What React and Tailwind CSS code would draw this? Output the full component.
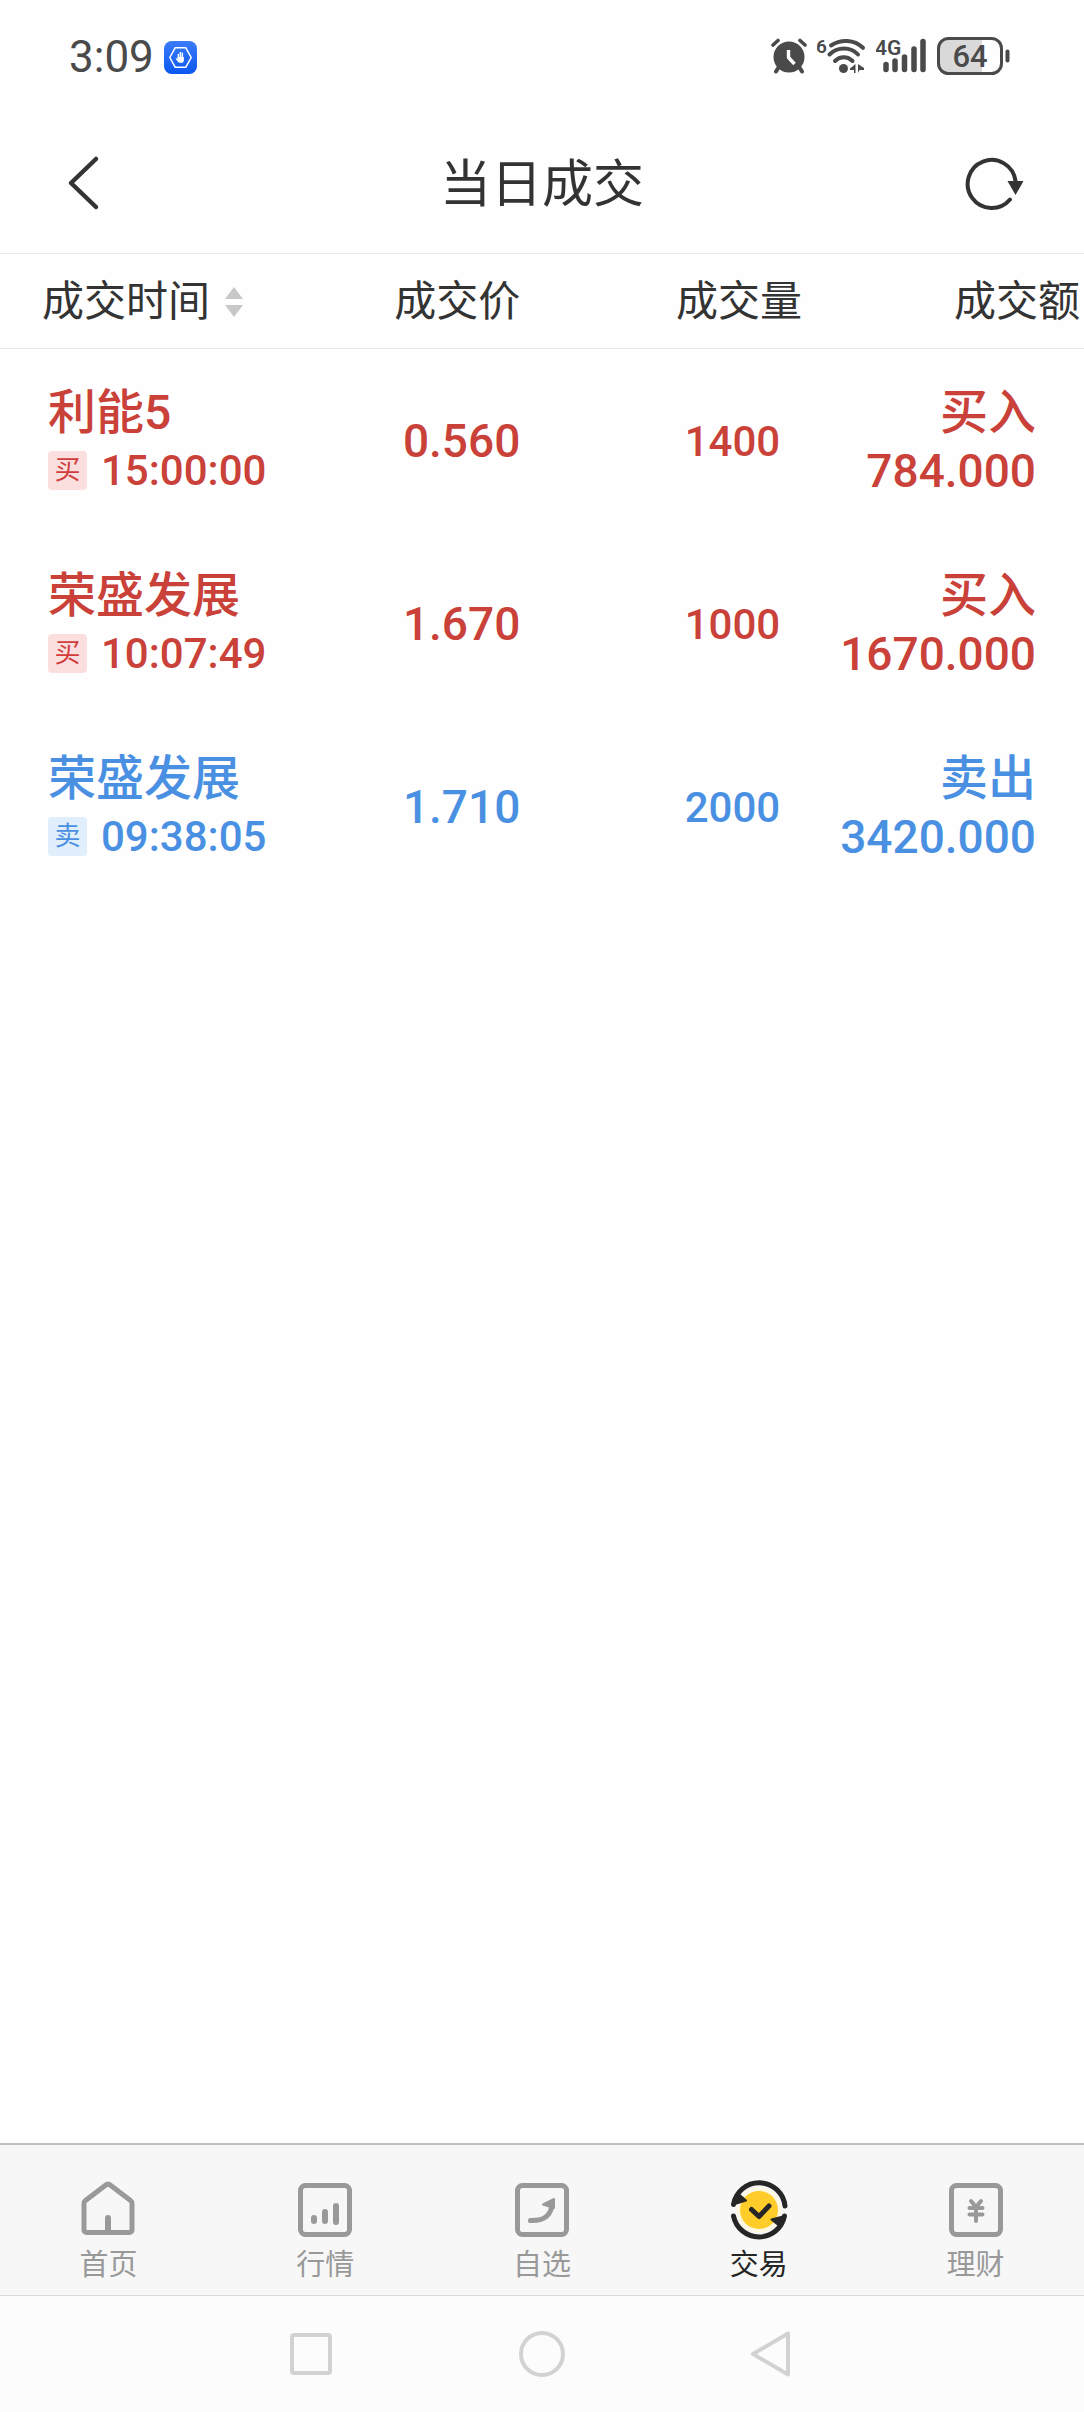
import React, { useState } from 'react';

const trades = [
    { id: 1, name: '利能5', side: 'buy', time: '15:00:00', price: '0.560', qty: '1400', amount: '784.000' },
    { id: 2, name: '荣盛发展', side: 'buy', time: '10:07:49', price: '1.670', qty: '1000', amount: '1670.000' },
    { id: 3, name: '荣盛发展', side: 'sell', time: '09:38:05', price: '1.710', qty: '2000', amount: '3420.000' },
];

const sides = {
    buy: { label: '买入', short: '买', text: 'text-[#c94138]', badge: 'bg-[#fbdfdf] text-[#d23c3c]' },
    sell: { label: '卖出', short: '卖', text: 'text-[#4a90e2]', badge: 'bg-[#e1eefb] text-[#4a90e2]' },
};

// ---------- status bar icons ----------

const ShieldIcon = () => (
    <svg className="w-[33px] h-[33px]" viewBox="0 0 34 34" fill="none" aria-hidden="true">
        <defs>
            <linearGradient id="shield" x1="0" y1="0" x2="0" y2="1">
                <stop offset="0" stopColor="#3b7bf8" />
                <stop offset="1" stopColor="#0a57f0" />
            </linearGradient>
        </defs>
        <rect width="34" height="34" rx="8" fill="url(#shield)" />
        <path d="M11.5 7h11L28 17l-5.500 10h-11L6 17z" stroke="#fff" strokeWidth="1.500" />
        <path d="M14.800 19v-5M16.900 18v-6.300M18.900 18v-5.500" stroke="#fff" strokeWidth="1.500" strokeLinecap="round" />
        <path d="M14 16.500h6.500v3.300a3 3 0 0 1-3 2.700h-.8c-1.500 0-2.700-1.200-3.900-3.200l-.9-1.300c.7-.5 1.400-.2 2.100.7z" fill="#fff" />
    </svg>
);

const AlarmIcon = () => (
    <svg className="w-[36px] h-[36px]" viewBox="0 0 36 36" fill="none" stroke="#4a4a4a" strokeLinecap="round" aria-hidden="true">
        <circle cx="18" cy="19" r="15.500" fill="#4a4a4a" stroke="none" />
        <path d="M2 7l5-4.500M34 7l-5-4.500" strokeWidth="3.600" />
        <path d="M7.500 29.500L5 33.500M28.500 29.500l2.500 4" strokeWidth="4" />
        <path d="M17.500 12v7.500l6 6.500" stroke="#fff" strokeWidth="3.400" strokeLinecap="butt" strokeLinejoin="round" />
    </svg>
);

const WifiIcon = () => (
    <svg className="w-[49px] h-[44px]" viewBox="0 -3 49 44" fill="none" stroke="#4a4a4a" strokeLinecap="round" aria-hidden="true">
        <text x="-1" y="16" fontSize="19" fontWeight="600" fill="#4a4a4a" stroke="none" fontFamily="Roboto, sans-serif">6</text>
        <path d="M14 8.500c10-6.500 23-6 32 2.300" strokeWidth="4" />
        <path d="M12.500 17.500c8-8 21-8 28.500 0" strokeWidth="4" />
        <path d="M18 24c5-5 12.500-5 17.500 0" strokeWidth="4" />
        <circle cx="26.500" cy="31.500" r="4.500" fill="#4a4a4a" stroke="none" />
        <path d="M38.500 27v9h-1.500v-3h-4v-1.500zM41 27v9l1.500-3h4.500v-2z" fill="#4a4a4a" stroke="none" />
    </svg>
);

const SignalIcon = () => (
    <svg className="w-[51px] h-[44px]" viewBox="0 -3 51 44" fill="none" stroke="#4a4a4a" strokeWidth="5.500" strokeLinecap="round" aria-hidden="true">
        <text x="-1" y="18" fontSize="21" fontWeight="600" fill="#4a4a4a" stroke="none" fontFamily="Roboto, sans-serif">4G</text>
        <path d="M10 27.500v5M19 24v8.500M28.500 20v12.500M38 12v20.500M47 4.500v28" />
    </svg>
);

const BatteryIcon = () => (
    <svg className="w-[74px] h-[38px]" viewBox="0 0 74 38" fill="none" aria-hidden="true">
        <path d="M12 2h33v34H12A10 10 0 0 1 2 26V12A10 10 0 0 1 12 2z" fill="#d9d9d9" />
        <rect x="1.500" y="1.500" width="63" height="35" rx="10" stroke="#4a4a4a" strokeWidth="3" />
        <path d="M70.500 14.500v9" stroke="#4a4a4a" strokeWidth="4" strokeLinecap="round" />
        <text x="33" y="30" textAnchor="middle" fontSize="31" fontWeight="500" fill="#4a4a4a" fontFamily="Roboto, sans-serif">64</text>
    </svg>
);

const StatusBar = () => (
    <div className="h-28 pl-[69px] pr-[73px] flex items-center justify-between text-[#4a4a4a]">
        <div className="pt-0.5 flex items-center gap-2.5">
            <span className="text-[44px] leading-none">3:09</span>
            <ShieldIcon />
        </div>
        <div className="flex items-center gap-2.5">
            <AlarmIcon />
            <WifiIcon />
            <SignalIcon />
            <BatteryIcon />
        </div>
    </div>
);

// ---------- header ----------

const Header = () => (
    <header className="h-[142px] px-[60px] flex items-center justify-between border-b border-[#e8e8e8] text-[#333]">
        <button type="button" aria-label="返回" className="w-[60px]">
            <svg className="w-[42px] h-[56px]" viewBox="0 0 42 56" fill="none" stroke="currentColor" strokeWidth="4.500" strokeLinecap="round" strokeLinejoin="round">
                <path d="M36 4L11 28l25 24" />
            </svg>
        </button>
        <h1 className="pt-1 text-[51px] leading-none">当日成交</h1>
        <button type="button" aria-label="刷新" className="w-[60px]">
            <svg className="w-[60px] h-[56px]" viewBox="0 0 60 56" fill="none">
                <path d="M46 44.500A24 24 0 1 1 51.500 26" stroke="currentColor" strokeWidth="4" strokeLinecap="round" />
                <path d="M43.500 26h16L51.500 40z" fill="currentColor" />
            </svg>
        </button>
    </header>
);

// ---------- table ----------

const SortArrows = () => (
    <svg className="w-[18px] h-[32px]" viewBox="0 0 18 32" fill="#c8c8c8" aria-hidden="true">
        <path d="M9 1l9 12H0zM9 31l9-12H0z" />
    </svg>
);

const TradeRow = ({ trade }) => {
    const side = sides[trade.side];
    return (
        <tr className={`h-[183px] font-medium ${side.text}`}>
            <td className="pt-1 pl-12">
                <div className="text-[48px] leading-[58px] whitespace-nowrap">{trade.name}</div>
                <div className="flex items-center gap-3.5 text-[42px] leading-[58px]">
                    <span className={`w-[39px] h-[39px] rounded-sm text-[26px] leading-[39px] text-center font-normal ${side.badge}`}>
                        {side.short}
                    </span>
                    {trade.time}
                </div>
            </td>
            <td className="pt-1 text-right text-[46px]">{trade.price}</td>
            <td className="pt-1 pr-[22px] text-right text-[42px]">{trade.qty}</td>
            <td className="pt-1 pr-12 text-right leading-[58px]">
                <div className="text-[48px]">{side.label}</div>
                <div className="text-[46px]">{trade.amount}</div>
            </td>
        </tr>
    );
};

const TradeTable = () => {
    const [asc, setAsc] = useState(false);
    const rows = asc ? [...trades].reverse() : trades;

    return (
        <table className="w-full table-fixed">
            <colgroup>
                <col className="w-[26%]" />
                <col className="w-[22%]" />
                <col className="w-[26%]" />
                <col className="w-[26%]" />
            </colgroup>
            <thead>
                <tr className="h-[94px] border-b border-[#e8e8e8] text-[42px] text-[#333]">
                    <th className="pt-0.5 pl-[42px] text-left font-normal">
                        <button type="button" onClick={() => setAsc(!asc)} className="flex items-center gap-[15px] whitespace-nowrap">
                            成交时间
                            <SortArrows />
                        </button>
                    </th>
                    <th className="pt-0.5 text-right font-normal">成交价</th>
                    <th className="pt-0.5 text-right font-normal">成交量</th>
                    <th className="pt-0.5 pr-1 text-right font-normal">成交额</th>
                </tr>
            </thead>
            <tbody>
                {rows.map((trade) => (
                    <TradeRow key={trade.id} trade={trade} />
                ))}
            </tbody>
        </table>
    );
};

// ---------- bottom tabs ----------

const TabSvg = ({ children }) => (
    <svg className="w-[60px] h-[60px]" viewBox="0 0 60 60" fill="none" stroke="#999" strokeWidth="5" strokeLinecap="round" strokeLinejoin="round" aria-hidden="true">
        {children}
    </svg>
);

const TabFrame = () => <rect x="5.500" y="5.500" width="49" height="49" rx="5" />;

const tabs = [
    {
        label: '首页',
        icon: (
            <TabSvg>
                <path d="M6 23.500a4 4 0 0 1 1.500-3L27.500 5.200a4 4 0 0 1 5 0l20 15.300a4 4 0 0 1 1.500 3V50a2.500 2.500 0 0 1-2.500 2.500h-43A2.500 2.500 0 0 1 6 50z" />
                <path d="M30 38v13" strokeWidth="6" />
            </TabSvg>
        ),
    },
    {
        label: '行情',
        icon: (
            <TabSvg>
                <TabFrame />
                <path d="M19 38v3M30 32v9M41 26v16" strokeWidth="6" />
            </TabSvg>
        ),
    },
    {
        label: '自选',
        icon: (
            <TabSvg>
                <TabFrame />
                <path d="M18.500 40.500C32 41 39.500 36 40.500 22" />
                <path d="M42 19v9l-11-3.500z" fill="#999" strokeWidth="2" />
            </TabSvg>
        ),
    },
    {
        label: '交易',
        active: true,
        icon: (
            <TabSvg>
                <circle cx="30" cy="30" r="22.500" fill="#fff8e0" stroke="none" />
                <circle cx="30" cy="30" r="19" fill="#ffcc29" stroke="none" />
                <g stroke="#262626">
                    <path d="M4.500 24.500A26 26 0 0 1 56 26" />
                    <path d="M55.500 36A26 26 0 0 1 4.500 36" />
                    <path d="M4 24.500L9.500 14l7.500 6.500z" fill="#262626" strokeWidth="2" />
                    <path d="M56 36l-5.500 10-8-6.500z" fill="#262626" strokeWidth="2" />
                    <path d="M22.500 29.500l7.500 7 10-10.500" strokeLinecap="round" />
                </g>
            </TabSvg>
        ),
    },
    {
        label: '理财',
        icon: (
            <TabSvg>
                <TabFrame />
                <path d="M25 21l5 6 5-6M30 27v14M23.500 28h13M23.500 34.500h13" strokeWidth="4" />
            </TabSvg>
        ),
    },
];

const TabBar = () => (
    <nav className="h-[152px] pt-[35px] flex bg-[#f7f7f7] border-t-2 border-[#bfbfbf]">
        {tabs.map((tab) => (
            <button
                key={tab.label}
                type="button"
                className={`flex-1 flex flex-col items-center justify-start gap-[5px] text-[29px] leading-[40px] ${tab.active ? 'text-[#262626]' : 'text-[#999]'}`}
            >
                {tab.icon}
                {tab.label}
            </button>
        ))}
    </nav>
);

const SystemNav = () => (
    <div className="h-[117px] flex items-center justify-center gap-[184px] bg-[#fcfcfc] border-t border-[#d9d9d9]">
        <button type="button" aria-label="最近任务">
            <svg className="w-[46px] h-[50px]" viewBox="0 0 46 50" fill="none" stroke="#d2d2d2" strokeWidth="4">
                <rect x="3" y="6" width="38" height="38" rx="2" />
            </svg>
        </button>
        <button type="button" aria-label="主屏幕">
            <svg className="w-[46px] h-[50px]" viewBox="0 0 46 50" fill="none" stroke="#d2d2d2" strokeWidth="4">
                <circle cx="23" cy="25" r="21" />
            </svg>
        </button>
        <button type="button" aria-label="返回上一页">
            <svg className="w-[46px] h-[50px]" viewBox="0 0 46 50" fill="none" stroke="#d2d2d2" strokeWidth="4" strokeLinejoin="round">
                <path d="M39 4.500v41L4 25z" />
            </svg>
        </button>
    </div>
);

export default function App() {
    return (
        <div className="min-h-screen flex flex-col overflow-x-hidden bg-[#fefefe] font-[Roboto,'Noto_Sans_CJK_SC',sans-serif]">
            <StatusBar />
            <Header />
            <main className="flex-1">
                <TradeTable />
            </main>
            <TabBar />
            <SystemNav />
        </div>
    );
}
